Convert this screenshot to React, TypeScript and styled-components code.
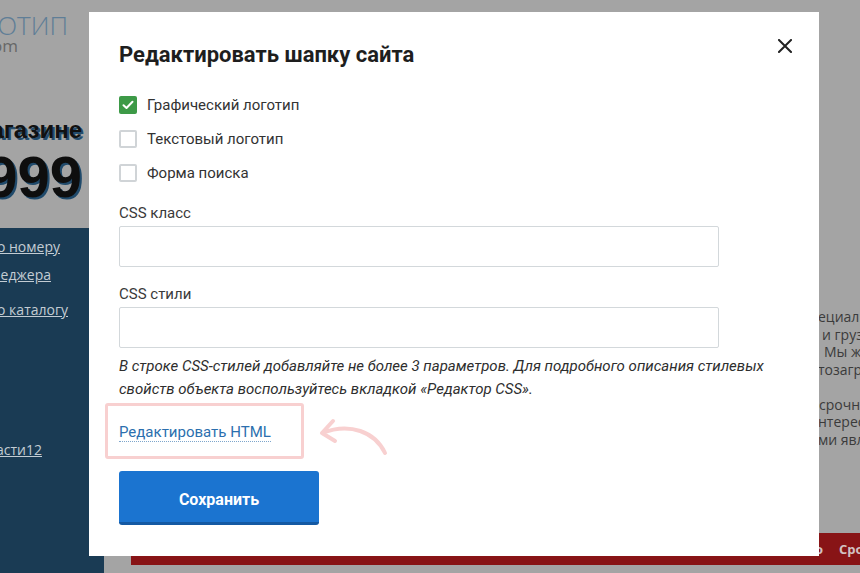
import React from "react";
import styled, { createGlobalStyle } from "styled-components";

const GlobalStyle = createGlobalStyle`
  * { box-sizing: border-box; }
  html, body { margin: 0; padding: 0; }
  body {
    background: #a4a4a4;
    font-family: "Roboto", "Liberation Sans", sans-serif;
    overflow: hidden;
  }
`;

/* ---------- dimmed background page ---------- */

const Page = styled.div`
  width: 860px;
  height: 573px;
  overflow: hidden;
  display: grid;
  grid-template-columns: 104px 27px 1fr;
  grid-template-rows: 228px 1fr;
  background: #a4a4a4;
`;

const Header = styled.div`
  grid-column: 1;
  grid-row: 1;
  overflow: hidden;
  display: flex;
  flex-direction: column;
`;

const CropLine = styled.div<{ $right: number; $mt?: number }>`
  display: flex;
  justify-content: flex-end;
  white-space: nowrap;
  padding-right: ${(p) => p.$right}px;
  margin-top: ${(p) => p.$mt ?? 0}px;
`;

const LogoMain = styled.span`
  font-family: "Open Sans", sans-serif;
  font-weight: 300;
  font-size: 26px;
  line-height: 26px;
  color: #5f7e97;
`;

const LogoSub = styled.span`
  font-family: "Open Sans", sans-serif;
  font-size: 17px;
  line-height: 16px;
  color: #676767;
`;

const Promo = styled.span`
  font-family: "Liberation Sans", Arial, sans-serif;
  font-weight: 700;
  font-size: 24px;
  line-height: 28px;
  color: #111;
  text-shadow: 2px 2px 0 #234c6d;
`;

const BigNumber = styled.span`
  font-family: "Liberation Sans", Arial, sans-serif;
  font-weight: 700;
  font-size: 58px;
  line-height: 58px;
  color: #0e0e0e;
  text-shadow: 2px 2px 0 #204a6b;
`;

const Sidebar = styled.div`
  grid-column: 1;
  grid-row: 2;
  background: #1a3b54;
  overflow: hidden;
  display: flex;
  flex-direction: column;
`;

const SideLink = styled.a`
  font-family: "Open Sans", sans-serif;
  font-size: 14px;
  line-height: 18px;
  color: #c3ccd3;
  text-decoration: underline;
`;

const Main = styled.div`
  grid-column: 3;
  grid-row: 1 / span 2;
  display: flex;
  flex-direction: column;
  min-width: 0;
`;

const RightText = styled.div`
  flex: 1;
  padding: 308px 0 0 687px;
  font-family: "Open Sans", sans-serif;
  font-size: 14px;
  line-height: 17.5px;
  color: #3b3b3b;
  white-space: nowrap;
  overflow: hidden;
`;

const TextLine = styled.div<{ $indent?: number }>`
  height: 17.5px;
  padding-left: ${(p) => p.$indent ?? 0}px;
`;

const RedBar = styled.div`
  height: 32px;
  margin-bottom: 8px;
  background: #881416;
  display: flex;
  align-items: center;
  gap: 16px;
  padding-left: 684px;
  font-family: "Open Sans", sans-serif;
  font-weight: 700;
  font-size: 13px;
  color: #d2c2c2;
  white-space: nowrap;
  overflow: hidden;
`;

/* ---------- modal ---------- */

const Layer = styled.div`
  position: fixed;
  inset: 0;
  padding: 12px 0 0 89px;
`;

const Modal = styled.div`
  position: relative;
  width: 730px;
  background: #fff;
  padding: 31px 30px 31px 30px;
  display: flex;
  flex-direction: column;
  align-items: flex-start;
`;

const CloseButton = styled.button`
  position: absolute;
  top: 24px;
  right: 24px;
  width: 20px;
  height: 20px;
  padding: 0;
  border: 0;
  background: transparent;
  display: flex;
  align-items: center;
  justify-content: center;
  cursor: pointer;
`;

const Title = styled.h2`
  margin: 0;
  font-family: "Roboto", sans-serif;
  font-weight: 700;
  font-size: 22px;
  line-height: 24px;
  color: #1e1e1e;
`;

const Options = styled.div`
  margin-top: 29px;
  display: flex;
  flex-direction: column;
  gap: 16px;
`;

const OptionRow = styled.label`
  display: flex;
  align-items: center;
  gap: 10px;
  height: 18px;
  cursor: pointer;
`;

const Box = styled.span<{ $checked: boolean }>`
  width: 18px;
  height: 18px;
  border-radius: 2px;
  flex: none;
  display: flex;
  align-items: center;
  justify-content: center;
  background: ${(p) => (p.$checked ? "#3d9a47" : "#fff")};
  border: ${(p) => (p.$checked ? "none" : "2px solid #d0d4d7")};
`;

const OptionText = styled.span`
  font-family: "Roboto", sans-serif;
  font-size: 15px;
  line-height: 18px;
  color: #333;
`;

const Field = styled.div<{ $mt: number }>`
  margin-top: ${(p) => p.$mt}px;
  width: 600px;
  display: flex;
  flex-direction: column;
  gap: 4px;
`;

const FieldLabel = styled.span`
  font-family: "Roboto", sans-serif;
  font-size: 15px;
  line-height: 18px;
  color: #3a3a3a;
`;

const TextInput = styled.input`
  width: 600px;
  height: 41px;
  border: 1px solid #d3d8db;
  border-radius: 2px;
  padding: 0 10px;
  font-family: "Roboto", sans-serif;
  font-size: 15px;
  outline: none;
`;

const Hint = styled.p`
  margin: 7px 0 0;
  font-family: "Roboto", sans-serif;
  font-style: italic;
  font-size: 15px;
  line-height: 23px;
  color: #2e2e2e;
  white-space: nowrap;
`;

const LinkRow = styled.div`
  position: relative;
  margin-top: 21px;
  height: 18px;
`;

const EditLink = styled.a`
  display: inline-block;
  font-family: "Roboto", sans-serif;
  font-size: 15px;
  line-height: 17px;
  color: #2b6fae;
  text-decoration: none;
  border-bottom: 1px dotted #7ea6cc;
  cursor: pointer;
`;

const Highlight = styled.span`
  position: absolute;
  left: -14px;
  top: -19px;
  width: 199px;
  height: 56px;
  border: 3.5px solid #f8d0d0;
  border-radius: 3px;
  pointer-events: none;
`;

const ArrowMark = styled.svg`
  position: absolute;
  left: 195px;
  top: -12px;
  overflow: visible;
  pointer-events: none;
`;

const SaveButton = styled.button`
  margin-top: 31px;
  width: 200px;
  height: 54px;
  border: 0;
  border-bottom: 3px solid #1459a3;
  border-radius: 3px;
  background: #1b74d0;
  color: #fff;
  font-family: "Roboto", sans-serif;
  font-weight: 700;
  font-size: 16px;
  cursor: pointer;
  padding-top: 7px;
`;

const options = [
  { label: "Графический логотип", checked: true },
  { label: "Текстовый логотип", checked: false },
  { label: "Форма поиска", checked: false },
];

const rightLines: { text: string; indent?: number }[] = [
  { text: "ециалистов" },
  { text: "и грузчиков", indent: 4 },
  { text: "Мы же", indent: 6 },
  { text: "тозагрузки" },
  { text: "" },
  { text: "срочно", indent: 1 },
  { text: "нтересно" },
  { text: "ми являются" },
];

export default function App() {
  return (
    <>
      <GlobalStyle />
      <Page>
        <Header>
          <CropLine $right={36} $mt={12}>
            <LogoMain>ЛОГОТИП</LogoMain>
          </CropLine>
          <CropLine $right={86}>
            <LogoSub>site.com</LogoSub>
          </CropLine>
          <CropLine $right={22} $mt={62}>
            <Promo>в магазине</Promo>
          </CropLine>
          <CropLine $right={22} $mt={4}>
            <BigNumber>8 800 999</BigNumber>
          </CropLine>
        </Header>
        <Sidebar>
          <CropLine $right={44} $mt={10}>
            <SideLink>Позвонить по номеру</SideLink>
          </CropLine>
          <CropLine $right={53} $mt={10}>
            <SideLink>Вызвать менеджера</SideLink>
          </CropLine>
          <CropLine $right={36} $mt={17}>
            <SideLink>Перейти по каталогу</SideLink>
          </CropLine>
          <CropLine $right={62} $mt={122}>
            <SideLink>Запчасти12</SideLink>
          </CropLine>
        </Sidebar>
        <Main>
          <RightText>
            {rightLines.map((l, i) => (
              <TextLine key={i} $indent={l.indent}>
                {l.text}
              </TextLine>
            ))}
          </RightText>
          <RedBar>
            <span>о</span>
            <span>Срочно</span>
          </RedBar>
        </Main>
      </Page>

      <Layer>
        <Modal>
          <CloseButton aria-label="Закрыть">
            <svg width="14" height="14" viewBox="0 0 14 14">
              <path
                d="M1 1 L13 13 M13 1 L1 13"
                stroke="#222"
                strokeWidth="2"
                strokeLinecap="square"
              />
            </svg>
          </CloseButton>
          <Title>Редактировать шапку сайта</Title>
          <Options>
            {options.map((o) => (
              <OptionRow key={o.label}>
                <Box $checked={o.checked}>
                  {o.checked && (
                    <svg width="12" height="10" viewBox="0 0 12 10">
                      <path
                        d="M1.5 5.2 L4.5 8 L10.5 1.8"
                        fill="none"
                        stroke="#fff"
                        strokeWidth="2"
                        strokeLinecap="round"
                        strokeLinejoin="round"
                      />
                    </svg>
                  )}
                </Box>
                <OptionText>{o.label}</OptionText>
              </OptionRow>
            ))}
          </Options>
          <Field $mt={22}>
            <FieldLabel>CSS класс</FieldLabel>
            <TextInput />
          </Field>
          <Field $mt={18}>
            <FieldLabel>CSS стили</FieldLabel>
            <TextInput />
          </Field>
          <Hint>
            В строке CSS-стилей добавляйте не более 3 параметров. Для подробного описания стилевых
            <br />
            свойств объекта воспользуйтесь вкладкой «Редактор CSS».
          </Hint>
          <LinkRow>
            <EditLink>Редактировать HTML</EditLink>
            <Highlight />
            <ArrowMark width="80" height="50" viewBox="0 0 80 50">
              <path
                d="M71 43 C61 22, 36 12, 8 23 M19 11 L8 23 L21 31"
                fill="none"
                stroke="#f8d0d0"
                strokeWidth="4"
                strokeLinecap="round"
                strokeLinejoin="round"
              />
            </ArrowMark>
          </LinkRow>
          <SaveButton>Сохранить</SaveButton>
        </Modal>
      </Layer>
    </>
  );
}
